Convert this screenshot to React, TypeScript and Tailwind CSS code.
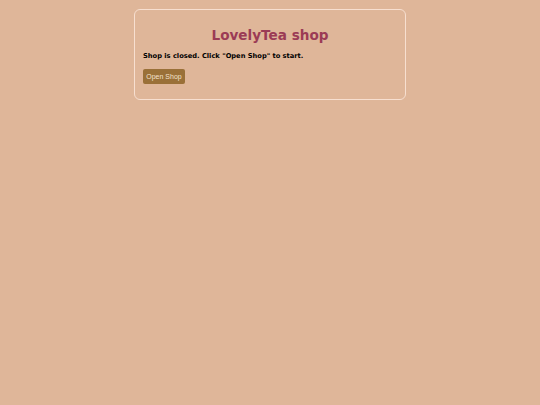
export default function App() {
  return (
    <div className="min-h-[405px] w-full bg-[#dfb699] pt-[9px]" style={{ fontFamily: '"DejaVu Sans", sans-serif' }}>
      <div className="mx-auto w-[272px] rounded-[6px] border border-[#f7dfd0] px-[8px] pt-[15px] pb-[15px]">
        <h1 className="text-center text-[13.6px] font-bold leading-[20px] text-[#9b3b55]">LovelyTea shop</h1>
        <p className="mt-[7px] text-[6.7px] font-bold leading-[8px] text-black">
          Shop is closed. Click "Open Shop" to start.
        </p>
        <button className="mt-[9px] block h-[15px] w-[42px] rounded-[2px] bg-[#9a7038] text-[7px] leading-[15px] text-[#f3e0cc]" style={{ fontFamily: '"Liberation Sans", sans-serif' }}>
          Open Shop
        </button>
      </div>
    </div>
  );
}
